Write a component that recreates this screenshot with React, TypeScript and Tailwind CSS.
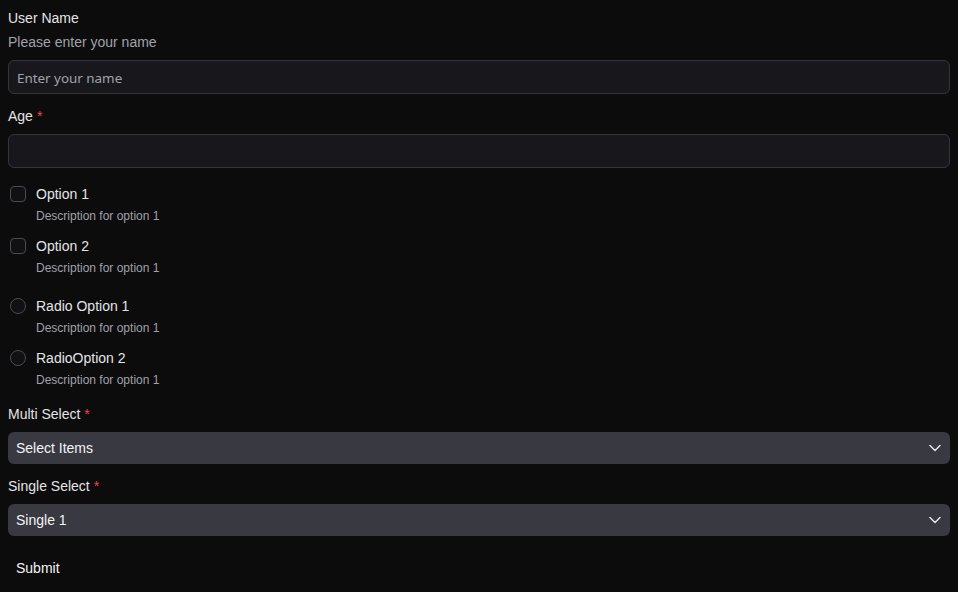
function Label({ text, required }: { text: string; required?: boolean }) {
  return (
    <div className="h-5 text-sm leading-5 text-[#e4e4e7]">
      {text}
      {required && <span className="ml-1 text-[#ef4444]">*</span>}
    </div>
  );
}

function Choice({
  label,
  radio,
}: {
  label: string;
  radio?: boolean;
}) {
  return (
    <div>
      <div className="flex h-5 items-center">
        <span
          className={
            "ml-[2px] h-4 w-4 border border-[#4a4a52] bg-[#111113] " +
            (radio ? "rounded-full" : "rounded-[4px]")
          }
        />
        <span className="ml-[10px] text-sm leading-5 text-[#e4e4e7]">{label}</span>
      </div>
      <div className="mt-1 pl-7 text-xs leading-4 text-[#a1a1aa]">
        Description for option 1
      </div>
    </div>
  );
}

function Select({ value }: { value: string }) {
  return (
    <div className="flex h-8 items-center justify-between rounded-md bg-[#393942] pl-2 pr-[9px] text-sm text-[#f4f4f5]">
      <span>{value}</span>
      <svg width="12" height="8" viewBox="0 0 12 8" fill="none" className="text-[#e4e4e7]">
        <path d="M1 1.5 6 6.5 11 1.5" stroke="currentColor" strokeWidth="1.5" strokeLinecap="round" strokeLinejoin="round" />
      </svg>
    </div>
  );
}

export default function App() {
  return (
    <div className="min-h-[592px] bg-[#0c0c0d] px-2 pt-2 font-['Liberation_Sans',Arial,sans-serif]">
      <Label text="User Name" />
      <div className="mt-1 h-5 text-sm leading-5 text-[#a1a1aa]">Please enter your name</div>
      <div className="mt-2 flex h-[34px] items-center rounded-md border border-[#34343b] bg-[#18181c] px-2 pt-[3px] font-['Noto_Sans',sans-serif] text-[13.4px] text-[#a1a1aa]">
        Enter your name
      </div>

      <div className="mt-3">
        <Label text="Age" required />
      </div>
      <div className="mt-2 h-[34px] rounded-md border border-[#34343b] bg-[#18181c]" />

      <div className="mt-4">
        <Choice label="Option 1" />
      </div>
      <div className="mt-3">
        <Choice label="Option 2" />
      </div>
      <div className="mt-5">
        <Choice label="Radio Option 1" radio />
      </div>
      <div className="mt-3">
        <Choice label="RadioOption 2" radio />
      </div>

      <div className="mt-4">
        <Label text="Multi Select" required />
      </div>
      <div className="mt-2">
        <Select value="Select Items" />
      </div>
      <div className="mt-3">
        <Label text="Single Select" required />
      </div>
      <div className="mt-2">
        <Select value="Single 1" />
      </div>

      <button
        type="button"
        className="mt-4 h-8 rounded-md px-2 text-sm text-[#f4f4f5]"
      >
        Submit
      </button>
    </div>
  );
}
